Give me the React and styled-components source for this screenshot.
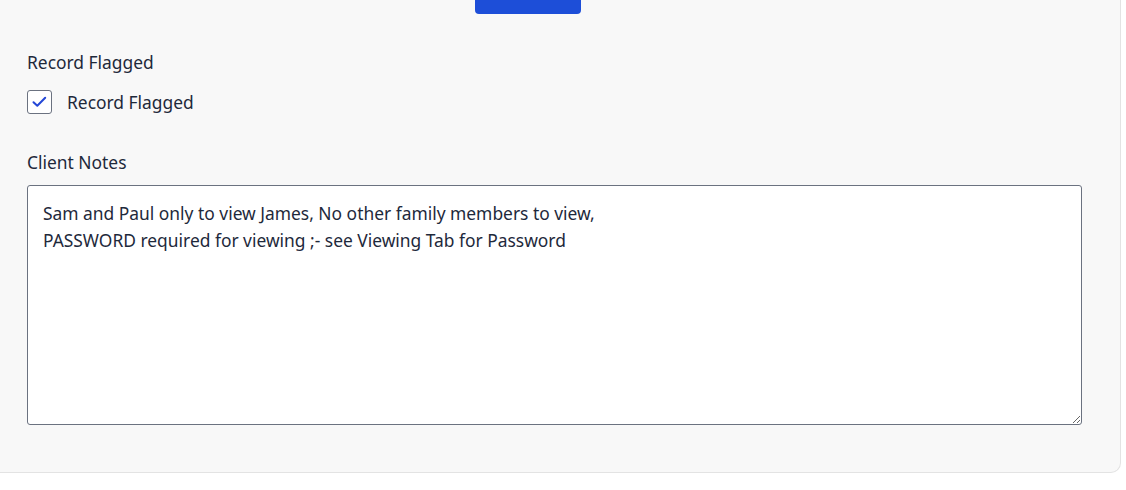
import React, { useState } from 'react';
import styled, { createGlobalStyle } from 'styled-components';

const GlobalStyle = createGlobalStyle`
   html, body {
      margin: 0;
      padding: 0;
      background: #ffffff;
   }

   body {
      font-family: 'Noto Sans', 'Open Sans', sans-serif;
      color: #1e293b;
   }
`;

const PanelStyled = styled.div`
   box-sizing: border-box;
   width: 1121px;
   height: 473px;
   background: #f8f8f8;
   border-right: 1px solid #e3e3e3;
   border-bottom: 1px solid #e3e3e3;
   border-bottom-right-radius: 10px;
   padding: 0 38px 0 27px;
   display: flex;
   flex-direction: column;
   overflow: hidden;
`;

const ButtonRow = styled.div`
   display: flex;
   padding-left: 448px;
`;

const SaveButton = styled.button`
   width: 106px;
   height: 40px;
   margin-top: -26px;
   border: none;
   border-radius: 4px;
   background: #1d4ed8;
   color: #ffffff;
`;

const FieldGroup = styled.div`
   display: flex;
   flex-direction: column;
   margin-top: ${(p) => p.$top}px;
`;

const Label = styled.label`
   font-size: 17.4px;
   line-height: 24px;
   color: #1e293b;
`;

const CheckRow = styled.label`
   display: flex;
   align-items: center;
   gap: 15px;
   margin-top: 16px;
   height: 24px;
   font-size: 17.4px;
   line-height: 24px;
   cursor: pointer;
`;

const CheckBox = styled.span`
   box-sizing: border-box;
   width: 25px;
   height: 24px;
   border: 1px solid #6b7280;
   border-radius: 3px;
   background: #ffffff;
   display: flex;
   align-items: center;
   justify-content: center;
`;

const NotesArea = styled.textarea`
   box-sizing: border-box;
   width: 1055px;
   height: 240px;
   margin-top: 11px;
   padding: 14px 15px;
   border: 1px solid #6b7280;
   border-radius: 3px;
   background: #ffffff;
   font-family: 'Noto Sans', 'Open Sans', sans-serif;
   font-size: 17.4px;
   line-height: 26.5px;
   color: #1e293b;
   resize: vertical;
   outline: none;
`;

export default function App() {
   const [flagged, setFlagged] = useState(true);
   const [notes, setNotes] = useState(
      'Sam and Paul only to view James, No other family members to view,\nPASSWORD required for viewing ;- see Viewing Tab for Password'
   );

   return (
      <>
         <GlobalStyle />
         <PanelStyled>
            <ButtonRow>
               <SaveButton type='button' />
            </ButtonRow>
            <FieldGroup $top={36}>
               <Label>Record Flagged</Label>
               <CheckRow onClick={() => setFlagged(!flagged)}>
                  <CheckBox>
                     {flagged && (
                        <svg width='15' height='12' viewBox='0 0 15 12'>
                           <path
                              d='M1.5 6.2 L5.3 9.8 L13.2 1.8'
                              fill='none'
                              stroke='#2447d6'
                              strokeWidth='2'
                              strokeLinecap='round'
                              strokeLinejoin='round'
                           />
                        </svg>
                     )}
                  </CheckBox>
                  Record Flagged
               </CheckRow>
            </FieldGroup>
            <FieldGroup $top={36}>
               <Label>Client Notes</Label>
               <NotesArea
                  value={notes}
                  onChange={(e) => setNotes(e.target.value)}
               />
            </FieldGroup>
         </PanelStyled>
      </>
   );
}
